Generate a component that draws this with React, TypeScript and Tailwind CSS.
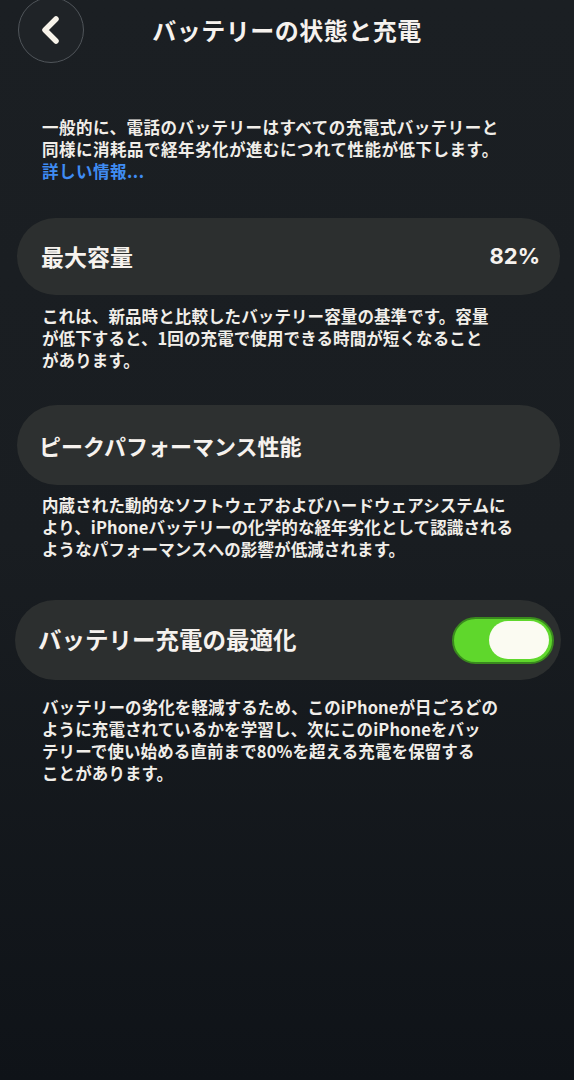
import { useState } from 'react';

const font = { fontFamily: '"Noto Sans CJK JP", "Noto Sans", sans-serif' };

function Toggle({ on, onChange }: { on: boolean; onChange: () => void }) {
  return (
    <button
      onClick={onChange}
      className={`flex h-[47px] w-[102px] shrink-0 items-center rounded-full border-2 p-[3px] ${
        on ? 'border-[#3a8a1e] bg-[#5fd72c] justify-end' : 'border-[#3b3f40] bg-[#3a3d3e] justify-start'
      }`}
    >
      <span className="h-[38px] w-[60px] rounded-full bg-[#fbfbf2]" />
    </button>
  );
}

function Note({ children, className = '' }: { children: React.ReactNode; className?: string }) {
  return (
    <p className={`px-[42px] text-[16.5px] font-semibold leading-[22px] text-[#f1eee9] ${className}`}>
      {children}
    </p>
  );
}

export default function App() {
  const [optimized, setOptimized] = useState(true);

  return (
    <div
      style={font}
      className="h-[1080px] w-[574px] overflow-hidden bg-gradient-to-b from-[#1b1f23] via-[#191d21] to-[#0f1318]"
    >
      {/* nav bar */}
      <div className="mt-[-3px] grid h-[66px] grid-cols-[100px_1fr_100px] items-center">
        <button className="ml-[18px] flex h-[66px] w-[66px] items-center justify-center rounded-full border border-[#50555a] bg-[#1f2327]">
          <svg width="26" height="30" viewBox="0 0 26 30" fill="none">
            <path d="M18 4 L7 15 L18 26" stroke="#f7f3ea" strokeWidth="5.5" strokeLinecap="round" strokeLinejoin="round" />
          </svg>
        </button>
        <h1 className="text-center text-[24px] font-bold tracking-[0.5px] text-[#f6f2ee]">バッテリーの状態と充電</h1>
        <div />
      </div>

      <Note className="mt-[53px] tracking-[0.5px]">
        一般的に、電話のバッテリーはすべての充電式バッテリーと
        <br />
        同様に消耗品で経年劣化が進むにつれて性能が低下します。
        <br />
        <span className="text-[#3f8cf3]">詳しい情報...</span>
      </Note>

      {/* maximum capacity */}
      <div className="mx-[17px] mt-[36px] flex h-[77px] w-[543px] items-center justify-between rounded-full bg-[#2c2f2f] pl-[24px] pr-[20px]">
        <span className="text-[23px] font-bold text-[#f6f2ee]">最大容量</span>
        <span className="text-[22px] font-bold text-[#f6f2ee]" style={{ fontFamily: '"Inter", "Noto Sans", sans-serif' }}>
          82%
        </span>
      </div>
      <Note className="mt-[10px] tracking-[0.1px]">
        これは、新品時と比較したバッテリー容量の基準です。容量
        <br />
        が低下すると、1回の充電で使用できる時間が短くなること
        <br />
        があります。
      </Note>

      {/* peak performance */}
      <div className="mx-[17px] mt-[34px] flex h-[80px] w-[543px] items-center rounded-full bg-[#2d3030] pl-[22px]">
        <span className="text-[22px] font-bold text-[#f6f2ee]">ピークパフォーマンス性能</span>
      </div>
      <Note className="mt-[9px] tracking-[0.1px]">
        内蔵された動的なソフトウェアおよびハードウェアシステムに
        <br />
        より、iPhoneバッテリーの化学的な経年劣化として認識される
        <br />
        ようなパフォーマンスへの影響が低減されます。
      </Note>

      {/* optimized charging */}
      <div className="mx-[15px] mt-[40px] flex h-[80px] w-[546px] items-center justify-between rounded-full bg-[#2c2f2f] pl-[23px] pr-[7px]">
        <span className="text-[23.5px] font-bold text-[#f6f2ee]">バッテリー充電の最適化</span>
        <Toggle on={optimized} onChange={() => setOptimized(!optimized)} />
      </div>
      <Note className="mt-[16px] tracking-[0.1px] leading-[22.5px]">
        バッテリーの劣化を軽減するため、このiPhoneが日ごろどの
        <br />
        ように充電されているかを学習し、次にこのiPhoneをバッ
        <br />
        テリーで使い始める直前まで80%を超える充電を保留する
        <br />
        ことがあります。
      </Note>
    </div>
  );
}
